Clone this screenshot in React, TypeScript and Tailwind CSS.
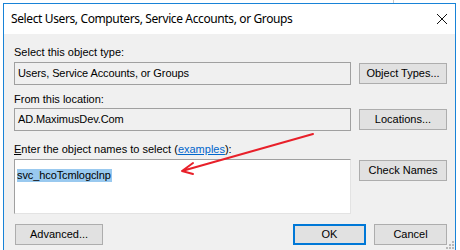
import React from "react";

function Btn({
  label,
  className = "",
  isDefault = false,
}: {
  label: React.ReactNode;
  className?: string;
  isDefault?: boolean;
}) {
  return (
    <div
      className={`flex h-[21px] items-center justify-center bg-[#e1e1e1] text-[11px] leading-[13px] text-black ${
        isDefault ? "border-2 border-[#0078d7]" : "border border-[#adadad]"
      } ${className}`}
    >
      {label}
    </div>
  );
}

function Field({ value }: { value: string }) {
  return (
    <div className="flex h-[23px] w-[337px] items-center border border-[#a0a0a0] bg-[#f0f0f0] pl-[3px] text-[11px] leading-[13px] tracking-[-0.1px] text-black">
      {value}
    </div>
  );
}

export default function App() {
  return (
    <div
      className="relative h-[250px] w-[460px] overflow-hidden bg-white"
      style={{ fontFamily: '"Liberation Sans", Arial, sans-serif' }}
    >
      {/* bits of the desktop behind the dialog */}
      <div className="absolute left-[393px] top-0 h-[3px] w-px bg-[#c8c8c8]" />

      <div className="ml-[3px] mt-[3px] h-[247px] w-[453px] border-x border-t border-[#1883d7]">
        {/* Title bar */}
        <div className="flex h-[30px] items-center justify-between bg-white pl-[7px] pr-[6px]">
          <span
            className="text-[12px] tracking-[-0.38px] text-black"
            style={{ fontFamily: '"Noto Sans", "Open Sans", sans-serif' }}
          >
            Select Users, Computers, Service Accounts, or Groups
          </span>
          <svg width="12" height="12" viewBox="0 0 12 12" className="mr-[1px]">
            <path d="M1 1 L11 11 M11 1 L1 11" stroke="#111" strokeWidth="1" />
          </svg>
        </div>

        {/* Body */}
        <div className="relative h-[216px] bg-[#f0f0f0] pl-[10px] pr-[8px] pt-[12px]">
          <div className="h-[13px] text-[11px] leading-[13px] text-black">
            Select this object type:
          </div>
          <div className="mt-[3px] flex items-start justify-between">
            <Field value="Users, Service Accounts, or Groups" />
            <Btn label="Object Types..." className="mt-px w-[88px]" />
          </div>

          <div className="mt-[8px] h-[13px] text-[11px] leading-[13px] text-black">
            From this location:
          </div>
          <div className="mt-[2px] flex items-start justify-between">
            <Field value="AD.MaximusDev.Com" />
            <Btn label="Locations..." className="mt-px w-[88px]" />
          </div>

          <div className="mt-[12px] h-[13px] text-[11px] leading-[13px] text-black">
            <span className="underline">E</span>nter the object names to select (
            <span className="text-[#0066cc] underline">examples</span>):
          </div>
          <div className="mt-[3px] flex items-start justify-between">
            <div className="h-[55px] w-[337px] border border-b-[#e3e3e3] border-l-[#a0a0a0] border-r-[#e3e3e3] border-t-[#a0a0a0] bg-white pl-[2px] pt-[2px]">
              <span className="inline-block h-[13px] bg-[#99c9ef] pr-[1px] text-[11px] leading-[13px] tracking-[-0.1px] text-black">
                svc_hcoTcmlogclnp
              </span>
            </div>
            <Btn label="Check Names" className="mt-px w-[88px]" />
          </div>

          <div className="mt-[10px] flex items-start">
            <Btn label="Advanced..." className="ml-px w-[88px]" />
            <div className="flex-1" />
            <Btn label="OK" isDefault className="w-[73px]" />
            <Btn label="Cancel" className="ml-[8px] w-[73px]" />
          </div>

          {/* resize grip */}
          <svg
            width="8"
            height="8"
            viewBox="0 0 8 8"
            className="absolute bottom-[1px] right-[1px]"
          >
            {[
              [6, 0],
              [3, 3],
              [6, 3],
              [0, 6],
              [3, 6],
              [6, 6],
            ].map(([x, y], i) => (
              <rect key={i} x={x} y={y} width="2" height="2" fill="#b8b8b8" />
            ))}
          </svg>
        </div>
      </div>

      {/* red annotation arrow */}
      <svg
        width="460"
        height="250"
        viewBox="0 0 460 250"
        className="pointer-events-none absolute left-0 top-0"
      >
        <path
          d="M313 134 L182 171 M193 163 L182 171 L193 174"
          stroke="#e8202a"
          strokeWidth="2"
          fill="none"
          strokeLinecap="round"
          strokeLinejoin="round"
        />
      </svg>
    </div>
  );
}
